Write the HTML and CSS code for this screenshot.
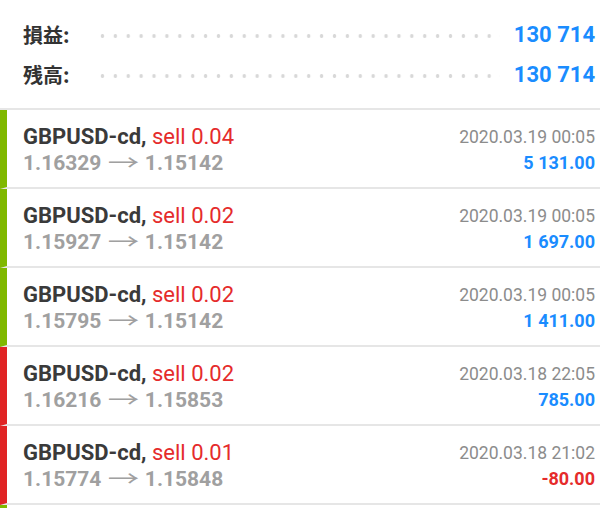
FILE: index.html
```html
<!DOCTYPE html>
<html lang="ja">
  <head>
    <meta charset="UTF-8" />
    <meta name="viewport" content="width=device-width, initial-scale=1.0" />
    <title>History</title>
    <link rel="stylesheet" href="styles.css">
  </head>
  <body>
    <div class="summary">
      <div class="sum-row">
        <span class="sum-label">損益:</span>
        <span class="dots"></span>
        <span class="sum-value">130 714</span>
      </div>
      <div class="sum-row">
        <span class="sum-label">残高:</span>
        <span class="dots"></span>
        <span class="sum-value">130 714</span>
      </div>
    </div>

    <div class="deals">
      <div class="deal win">
        <div class="left">
          <div class="title">GBPUSD-cd, <span class="type">sell 0.04</span></div>
          <div class="prices">1.16329 <span class="arrow">→</span> 1.15142</div>
        </div>
        <div class="right">
          <div class="time">2020.03.19 00:05</div>
          <div class="profit">5 131.00</div>
        </div>
      </div>

      <div class="deal win">
        <div class="left">
          <div class="title">GBPUSD-cd, <span class="type">sell 0.02</span></div>
          <div class="prices">1.15927 <span class="arrow">→</span> 1.15142</div>
        </div>
        <div class="right">
          <div class="time">2020.03.19 00:05</div>
          <div class="profit">1 697.00</div>
        </div>
      </div>

      <div class="deal win">
        <div class="left">
          <div class="title">GBPUSD-cd, <span class="type">sell 0.02</span></div>
          <div class="prices">1.15795 <span class="arrow">→</span> 1.15142</div>
        </div>
        <div class="right">
          <div class="time">2020.03.19 00:05</div>
          <div class="profit">1 411.00</div>
        </div>
      </div>

      <div class="deal loss">
        <div class="left">
          <div class="title">GBPUSD-cd, <span class="type">sell 0.02</span></div>
          <div class="prices">1.16216 <span class="arrow">→</span> 1.15853</div>
        </div>
        <div class="right">
          <div class="time">2020.03.18 22:05</div>
          <div class="profit">785.00</div>
        </div>
      </div>

      <div class="deal loss">
        <div class="left">
          <div class="title">GBPUSD-cd, <span class="type">sell 0.01</span></div>
          <div class="prices">1.15774 <span class="arrow">→</span> 1.15848</div>
        </div>
        <div class="right">
          <div class="time">2020.03.18 21:02</div>
          <div class="profit neg">-80.00</div>
        </div>
      </div>

      <!-- next row only just peeks in at the bottom -->
      <div class="deal win"></div>
    </div>
  </body>
</html>
```

FILE: styles.css
```css
* {
  margin: 0;
  padding: 0;
  box-sizing: border-box;
}
body {
  font-family: Roboto, "Noto Sans CJK JP", sans-serif;
  background-color: #fff;
  color: #3a3a3a;
  overflow: hidden;
}
.summary {
  padding: 14px 5px 14px 23px;
  border-bottom: 2px solid #e6e6e6;
}
.sum-row {
  display: flex;
  align-items: center;
  height: 40px;
}
.sum-label {
  font-family: "Noto Sans CJK JP", sans-serif;
  font-size: 20px;
  font-weight: 700;
  color: #333;
}
.dots {
  flex: 1;
  height: 8px;
  margin: 4px 14px 0 26px;
  background-image: radial-gradient(circle, #d8d8d8 1.6px, transparent 2.1px);
  background-size: 12.9px 8px;
  background-repeat: repeat-x;
}
.sum-value {
  font-size: 22px;
  font-weight: 700;
  color: #1a8cff;
}
.deal {
  display: flex;
  justify-content: space-between;
  height: 79px;
  padding: 14px 5px 0 16px;
  border-left: 7px solid #7fb800;
  border-bottom: 2px solid #e6e6e6;
}
.deal.loss {
  border-left-color: #e02424;
}
.title {
  font-size: 22px;
  font-weight: 700;
  line-height: 26px;
  color: #3a3a3a;
}
.type {
  font-weight: 400;
  color: #e52b2b;
}
.prices {
  font-size: 21px;
  font-weight: 700;
  line-height: 26px;
  color: #a0a0a0;
}
.arrow {
  display: inline-block;
  font-size: 21px;
  font-weight: 400;
  line-height: 1;
  transform: scaleX(1.5);
  margin: 0 6px;
}
.right {
  text-align: right;
}
.time {
  font-size: 17.5px;
  line-height: 26px;
  color: #8c8c8c;
}
.profit {
  font-size: 18px;
  font-weight: 700;
  line-height: 26px;
  color: #1a8cff;
}
.profit.neg {
  color: #e52b2b;
}
```
